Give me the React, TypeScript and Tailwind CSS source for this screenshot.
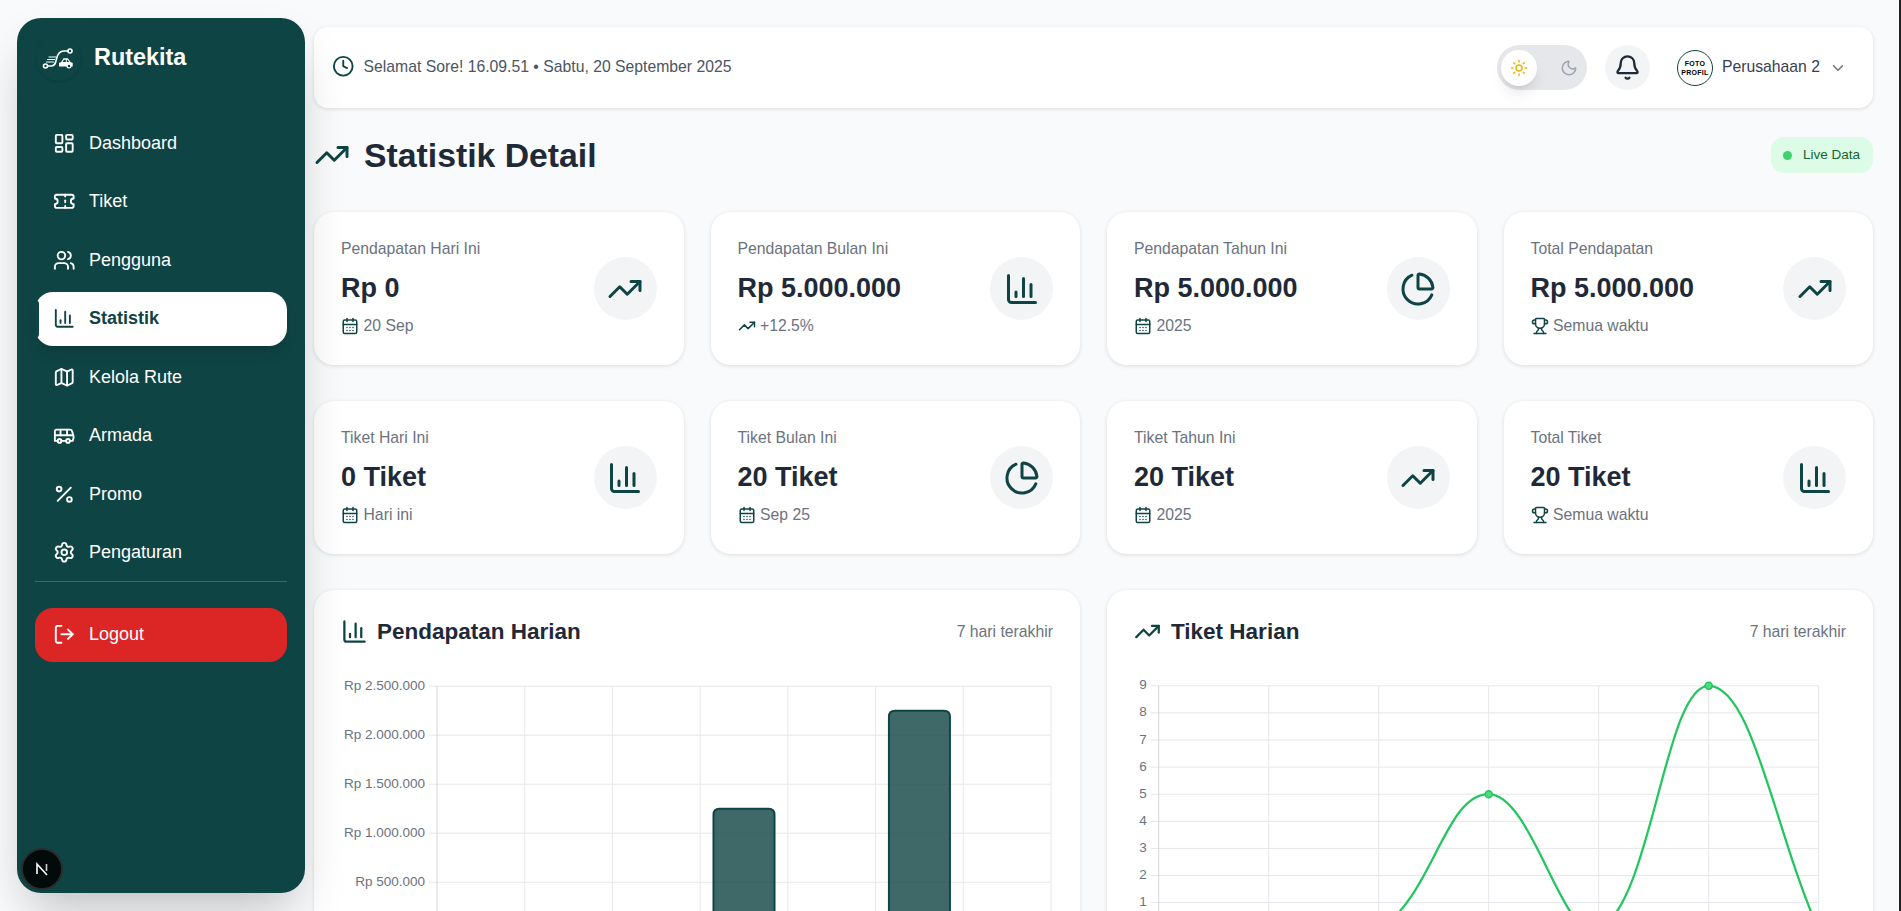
/**
 * Statistik Detail page of the Rutekita dashboard.
 */

import {
  Bell,
  Bus,
  CalendarDays,
  ChartColumn,
  ChartPie,
  ChevronDown,
  Clock,
  LayoutDashboard,
  LogOut,
  Map as MapIcon,
  Moon,
  Percent,
  Settings,
  Sun,
  Ticket,
  TrendingUp,
  Trophy,
  Users,
} from 'lucide-react';
import type { LucideIcon } from 'lucide-react';

const FONT = '"Liberation Sans", Arial, sans-serif';

const navItems: { label: string; icon: LucideIcon; active?: boolean }[] = [
  { label: 'Dashboard', icon: LayoutDashboard },
  { label: 'Tiket', icon: Ticket },
  { label: 'Pengguna', icon: Users },
  { label: 'Statistik', icon: ChartColumn, active: true },
  { label: 'Kelola Rute', icon: MapIcon },
  { label: 'Armada', icon: Bus },
  { label: 'Promo', icon: Percent },
  { label: 'Pengaturan', icon: Settings },
];

interface StatCard {
  label: string;
  value: string;
  sub: string;
  subIcon: LucideIcon;
  icon: LucideIcon;
}

const revenueCards: StatCard[] = [
  { label: 'Pendapatan Hari Ini', value: 'Rp 0', sub: '20 Sep', subIcon: CalendarDays, icon: TrendingUp },
  { label: 'Pendapatan Bulan Ini', value: 'Rp 5.000.000', sub: '+12.5%', subIcon: TrendingUp, icon: ChartColumn },
  { label: 'Pendapatan Tahun Ini', value: 'Rp 5.000.000', sub: '2025', subIcon: CalendarDays, icon: ChartPie },
  { label: 'Total Pendapatan', value: 'Rp 5.000.000', sub: 'Semua waktu', subIcon: Trophy, icon: TrendingUp },
];

const ticketCards: StatCard[] = [
  { label: 'Tiket Hari Ini', value: '0 Tiket', sub: 'Hari ini', subIcon: CalendarDays, icon: ChartColumn },
  { label: 'Tiket Bulan Ini', value: '20 Tiket', sub: 'Sep 25', subIcon: CalendarDays, icon: ChartPie },
  { label: 'Tiket Tahun Ini', value: '20 Tiket', sub: '2025', subIcon: CalendarDays, icon: TrendingUp },
  { label: 'Total Tiket', value: '20 Tiket', sub: 'Semua waktu', subIcon: Trophy, icon: ChartColumn },
];

function RutekitaLogo() {
  return (
    <svg viewBox="0 0 45 45" className="h-[45px] w-[45px]" fill="none" stroke="white" strokeWidth="1.6" strokeLinecap="round">
      <circle cx="9.5" cy="30" r="2" />
      <circle cx="34" cy="15" r="2" />
      <path d="M11.5 30h4c3.5 0 4-3 4.8-6.5C21.2 19 23.5 15 28 15h4" />
      <path d="M13 21h7M11.5 23.5h7M10.5 26h7" strokeWidth="1.2" />
      <path d="M23 30.5v-3.5l2.2-1 2.3-3.8h4.4l2.6 3.8 2.2 1v3.5z" fill="white" stroke="none" />
      <path d="M28 23.8h1.8v2.2h-3.2zM30.8 23.8h.8l1.6 2.2h-2.4z" fill="#0f4444" stroke="none" />
      <circle cx="33" cy="30" r="1.9" fill="#0f4444" strokeWidth="1.2" />
    </svg>
  );
}

function Sidebar() {
  return (
    <aside className="z-10 flex h-[875px] w-[288px] shrink-0 flex-col rounded-[24px] bg-[#0f4444] px-[18px] shadow-2xl">
      <div className="mb-[18px] flex h-[80px] items-center gap-[13px] pl-[1px]">
        <div className="h-[45px] w-[45px] rounded-full shadow-sm shadow-black/10">
          <RutekitaLogo />
        </div>
        <span className="text-[23.4px] font-bold text-white">Rutekita</span>
      </div>
      <nav className="flex flex-col gap-[4.5px]">
        {navItems.map(({ label, icon: Icon, active }) => (
          <a
            key={label}
            className={
              active
                ? 'relative flex h-[54px] items-center gap-[13.5px] rounded-[18px] bg-white px-[18px] text-[18px] font-bold text-[#0f4444] shadow-lg'
                : 'flex h-[54px] items-center gap-[13.5px] rounded-[18px] px-[18px] text-[18px] text-white'
            }
          >
            {active && <span className="absolute left-0 top-[8px] h-[38px] w-[4px] rounded-r-[4px] bg-[#0f4444]" />}
            <Icon className="h-[22.5px] w-[22.5px] shrink-0" />
            {label}
          </a>
        ))}
      </nav>
      <div className="mt-[1px] border-t border-white/20 pt-[26px]">
        <a className="flex h-[54px] items-center gap-[13.5px] rounded-[18px] bg-[#dc2626] px-[18px] text-[18px] text-white">
          <LogOut className="h-[22.5px] w-[22.5px] shrink-0" />
          Logout
        </a>
      </div>
      <div className="relative mt-auto">
        <div className="absolute bottom-[3px] left-[-14px] flex h-[42px] w-[42px] items-center justify-center rounded-full border-[2px] border-[#2b2b2b] bg-[#020a0a]">
          <svg viewBox="0 0 16 16" className="h-[16px] w-[16px]" fill="none" strokeWidth="1.6">
            <path d="M3 13V3l10 11" stroke="white" />
            <path d="M12.5 3v7" stroke="#cfcfcf" />
          </svg>
        </div>
      </div>
    </aside>
  );
}

function Header() {
  return (
    <header className="flex h-[81px] items-center justify-between rounded-[14px] bg-white pl-[18px] pr-[26px] shadow-[0_1px_4px_rgba(0,0,0,0.12)]">
      <div className="flex items-center gap-[9px] pb-[2px] text-[15.75px] text-[#4b5563]">
        <Clock className="h-[22.5px] w-[22.5px] text-[#0f4444]" />
        Selamat Sore! 16.09.51 • Sabtu, 20 September 2025
      </div>
      <div className="flex items-center">
        <div className="flex h-[45px] w-[90px] items-center rounded-full bg-[#e5e7eb] px-[4.5px]">
          <div className="flex h-[36px] w-[36px] items-center justify-center rounded-full bg-white shadow-lg">
            <Sun className="h-[18px] w-[18px] text-[#eab308]" />
          </div>
          <Moon className="ml-[23px] h-[18px] w-[18px] text-[#9ca3af]" />
        </div>
        <div className="ml-[18px] flex h-[45px] w-[45px] items-center justify-center rounded-full bg-[#f3f4f6]">
          <Bell className="h-[27px] w-[27px] text-[#1f2937]" />
        </div>
        <div className="ml-[27px] flex h-[36px] w-[36px] flex-col items-center justify-center rounded-full border-[1.5px] border-[#0f4444] bg-white text-[7px] font-bold leading-[9px] tracking-[0.3px] text-black">
          <span>FOTO</span>
          <span>PROFIL</span>
        </div>
        <span className="ml-[9px] pb-[2px] text-[15.75px] text-[#374151]">Perusahaan 2</span>
        <ChevronDown className="ml-[9px] h-[18px] w-[18px] text-[#6b7280]" />
      </div>
    </header>
  );
}

function StatGrid({ cards, className }: { cards: StatCard[]; className?: string }) {
  return (
    <div className={`grid grid-cols-4 gap-[27px] ${className ?? ''}`}>
      {cards.map(({ label, value, sub, subIcon: SubIcon, icon: Icon }) => (
        <div key={label} className="flex h-[153px] items-center justify-between rounded-[20px] bg-white px-[27px] shadow-[0_1px_4px_rgba(0,0,0,0.12)]">
          <div className="pb-[2px]">
            <div className="text-[15.75px] leading-[22.5px] text-[#6b7280]">{label}</div>
            <div className="mt-[9px] text-[27px] font-bold leading-[36px] text-[#1f2937]">{value}</div>
            <div className="mt-[9px] flex items-center gap-[4.5px] text-[15.75px] leading-[22.5px] text-[#6b7280]">
              <SubIcon className="h-[18px] w-[18px] text-[#0f4444]" />
              {sub}
            </div>
          </div>
          <div className="flex h-[63px] w-[63px] items-center justify-center rounded-full bg-[#f3f4f6]">
            <Icon className="h-[36px] w-[36px] text-[#0f4444]" />
          </div>
        </div>
      ))}
    </div>
  );
}

function ChartCard({ title, icon: Icon, gap, children }: { title: string; icon: LucideIcon; gap: string; children: React.ReactNode }) {
  return (
    <div className="h-[500px] rounded-[20px] bg-white px-[27px] pt-[26px] shadow-[0_1px_4px_rgba(0,0,0,0.12)]">
      <div className="flex h-[31.5px] items-center justify-between">
        <div className={`flex items-center ${gap} text-[22.5px] font-bold text-[#1f2937]`}>
          <Icon className="h-[27px] w-[27px] text-[#0f4444]" />
          {title}
        </div>
        <span className="text-[15.75px] text-[#6b7280]">7 hari terakhir</span>
      </div>
      <div className="mt-[27px]">{children}</div>
    </div>
  );
}

const GRID = '#e5e7eb';
const AXIS = '#d4d6da';
const TICK = '#6b7280';

// Svg origin is the top left of the chart box, at page (341, 675.5) and (1134, 675.5)
function RevenueChart() {
  const left = 96;
  const right = 710;
  const top = 11.2;
  const stepY = 49;
  const stepX = (right - left) / 7;
  const ticks = ['Rp 2.500.000', 'Rp 2.000.000', 'Rp 1.500.000', 'Rp 1.000.000', 'Rp 500.000'];
  const bars = [
    { index: 3, value: 1.25 },
    { index: 5, value: 2.25 },
  ];
  const zeroY = top + stepY * 5;

  return (
    <svg width="712" height="300" className="block" style={{ fontFamily: FONT }}>
      {ticks.map((tick, i) => (
        <g key={tick}>
          <line x1={left - 8} x2={right} y1={top + i * stepY} y2={top + i * stepY} stroke={GRID} />
          <text x={left - 12} y={top + i * stepY + 3.5} textAnchor="end" fontSize="13.5" fill={TICK}>
            {tick}
          </text>
        </g>
      ))}
      {Array.from({ length: 8 }, (_, i) => (
        <line key={i} x1={left + i * stepX} x2={left + i * stepX} y1={top} y2={zeroY + 8} stroke={i === 0 ? AXIS : GRID} />
      ))}
      {bars.map(({ index, value }) => {
        const x = left + (index + 0.5) * stepX - 30.5;
        const y = zeroY - value * 2 * stepY;
        return (
          <path
            key={index}
            d={`M${x} ${zeroY}V${y + 6}q0-6 6-6h49q6 0 6 6V${zeroY}`}
            fill="rgba(15,68,68,0.8)"
            stroke="#0f4444"
            strokeWidth="2"
          />
        );
      })}
    </svg>
  );
}

// Same spline as chart.js with tension 0.4
function smoothPath(points: { x: number; y: number }[]) {
  const controls = points.map((p, i) => {
    const prev = points[i - 1] ?? p;
    const next = points[i + 1] ?? p;
    const d01 = Math.hypot(p.x - prev.x, p.y - prev.y);
    const d12 = Math.hypot(next.x - p.x, next.y - p.y);
    const total = d01 + d12 || 1;
    const fa = (0.4 * d01) / total;
    const fb = (0.4 * d12) / total;
    return {
      inX: p.x - fa * (next.x - prev.x),
      inY: p.y - fa * (next.y - prev.y),
      outX: p.x + fb * (next.x - prev.x),
      outY: p.y + fb * (next.y - prev.y),
    };
  });
  let d = `M${points[0].x} ${points[0].y}`;
  for (let i = 1; i < points.length; i++) {
    const a = controls[i - 1];
    const b = controls[i];
    d += `C${a.outX} ${a.outY} ${b.inX} ${b.inY} ${points[i].x} ${points[i].y}`;
  }
  return d;
}

function TicketChart() {
  const left = 24.7;
  const stepX = 110;
  const top = 10.8;
  const stepY = 27.1;
  const data = [0, 0, 0, 5, 0, 9, 0];
  const points = data.map((value, i) => ({ x: left + i * stepX, y: top + (9 - value) * stepY }));
  const zeroY = top + 9 * stepY;

  return (
    <svg width="712" height="300" className="block" style={{ fontFamily: FONT }}>
      {Array.from({ length: 9 }, (_, i) => (
        <g key={i}>
          <line x1={left - 8} x2={left + 6 * stepX} y1={top + i * stepY} y2={top + i * stepY} stroke={GRID} />
          <text x={left - 12} y={top + i * stepY + 3.5} textAnchor="end" fontSize="13.5" fill={TICK}>
            {9 - i}
          </text>
        </g>
      ))}
      {data.map((_, i) => (
        <line key={i} x1={left + i * stepX} x2={left + i * stepX} y1={top} y2={zeroY + 8} stroke={i === 0 ? AXIS : GRID} />
      ))}
      <path d={smoothPath(points)} fill="none" stroke="#22c55e" strokeWidth="2.25" />
      {points.map((p, i) => (
        <circle key={i} cx={p.x} cy={p.y} r="3.5" fill="#4ade80" stroke="#22c55e" strokeWidth="1.5" />
      ))}
    </svg>
  );
}

export default function App() {
  return (
    <div className="flex h-screen overflow-hidden bg-[#f9fafb] pl-[17px] pt-[18px]" style={{ fontFamily: FONT }}>
      <Sidebar />
      <main className="ml-[9px] min-w-0 flex-1 pr-[26px] pt-[9px]">
        <Header />
        <div className="mt-[29px] flex h-[36px] items-center justify-between">
          <h1 className="flex items-center gap-[14px] text-[33.75px] font-bold text-[#1f2937]">
            <TrendingUp className="h-[36px] w-[36px] text-[#0f4444]" />
            Statistik Detail
          </h1>
          <div className="flex h-[36px] items-center gap-[11px] rounded-[13px] bg-[#dcfce7] pl-[12px] pr-[13px] text-[13.5px] text-[#166534]">
            <span className="h-[9px] w-[9px] rounded-full bg-[#3dd170]" />
            Live Data
          </div>
        </div>
        <StatGrid cards={revenueCards} className="mt-[39px]" />
        <StatGrid cards={ticketCards} className="mt-[36px]" />
        <div className="mt-[36px] grid grid-cols-2 gap-[27px]">
          <ChartCard title="Pendapatan Harian" icon={ChartColumn} gap="gap-[9px]">
            <RevenueChart />
          </ChartCard>
          <ChartCard title="Tiket Harian" icon={TrendingUp} gap="gap-[10px]">
            <TicketChart />
          </ChartCard>
        </div>
      </main>
      {/* dark window edge on the right of the screenshot */}
      <div className="mt-[-18px] w-[2px] shrink-0 bg-[#222]" />
    </div>
  );
}
